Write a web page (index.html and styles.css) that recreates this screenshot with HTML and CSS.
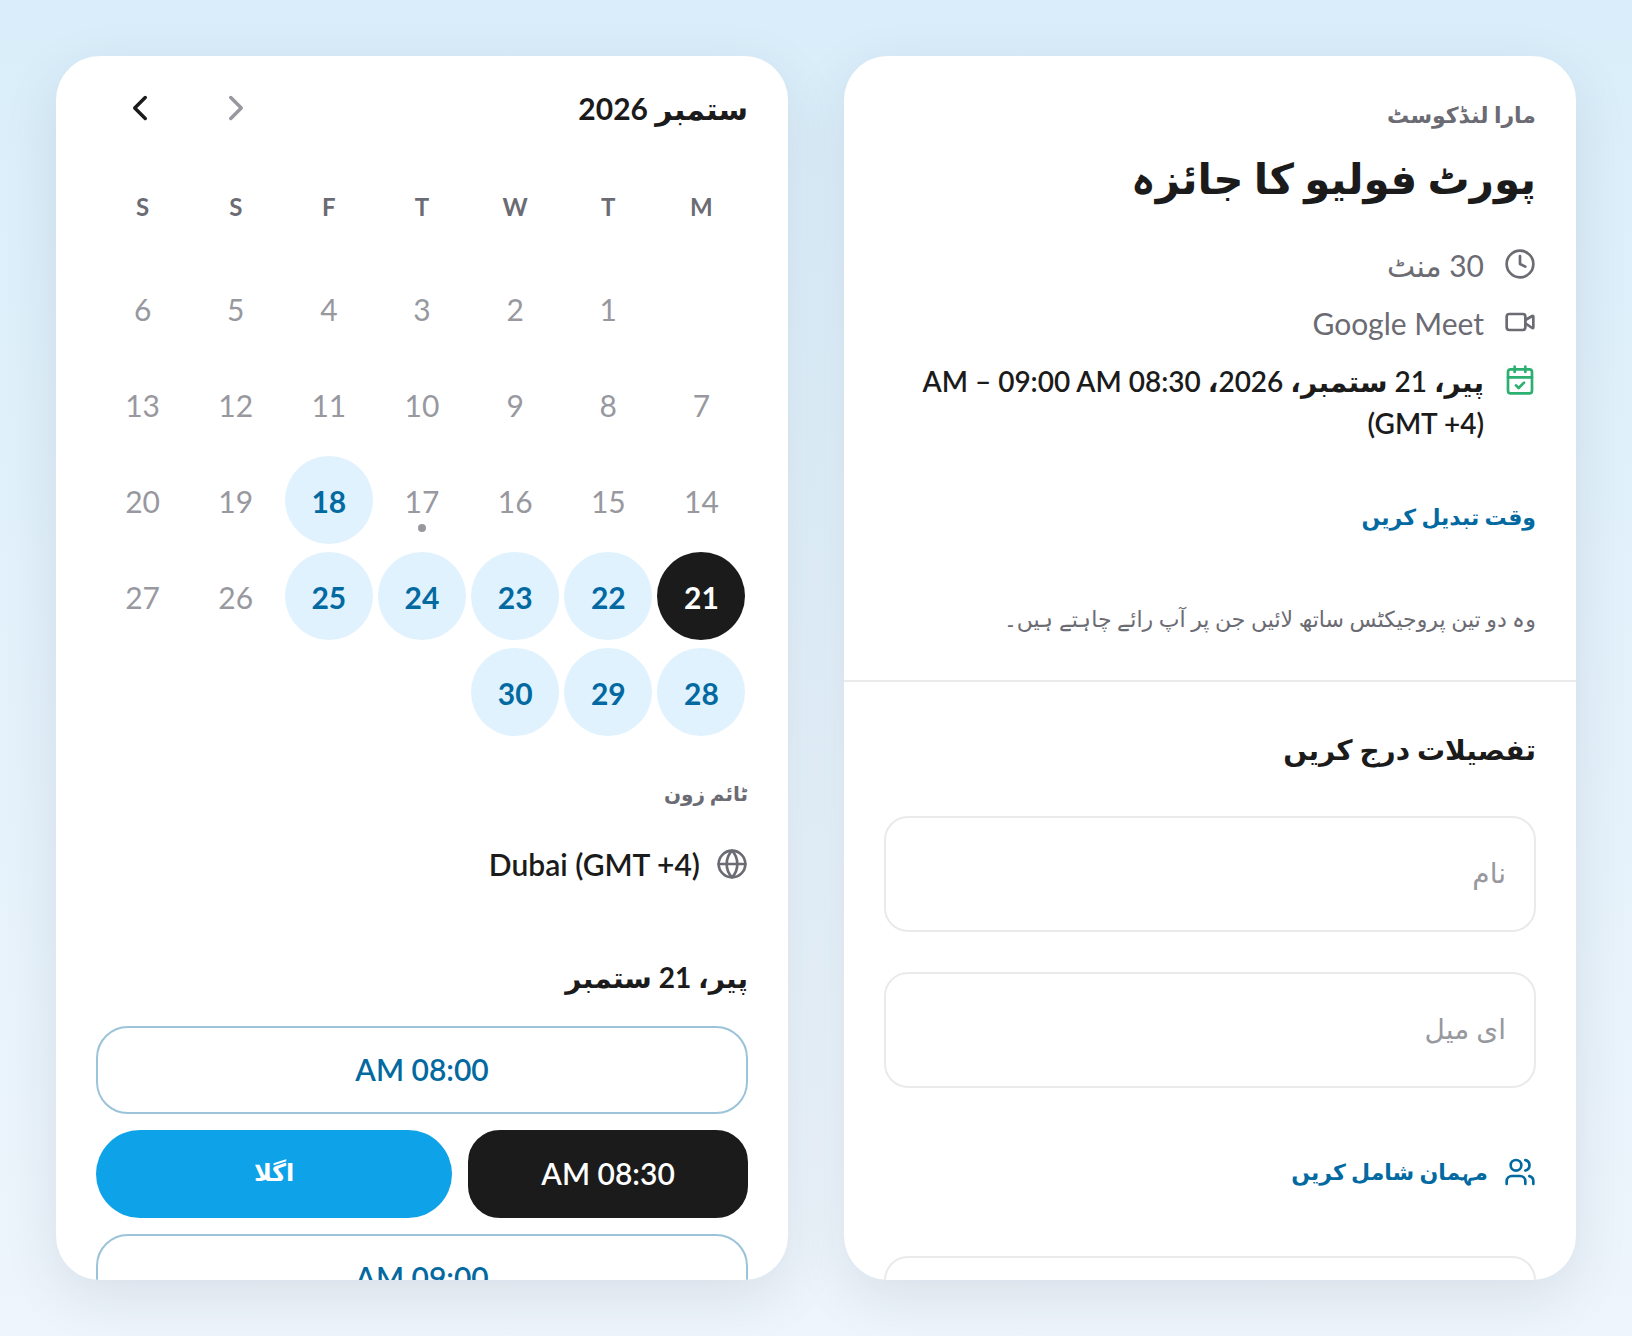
FILE: index.html
```
<!DOCTYPE html>
<html lang="ur" dir="rtl">
<head>
    <meta charset="UTF-8">
    <meta name="viewport" content="width=device-width, initial-scale=1.0">
    <title>پورٹ فولیو کا جائزہ</title>
    <link rel="stylesheet" href="styles.css">
</head>
<body>
    <main class="booking">
        <section class="card details">
            <header class="event">
                <p class="host">مارا لنڈکوسٹ</p>
                <h1>پورٹ فولیو کا جائزہ</h1>
                <ul class="meta">
                    <li>
                        <svg class="icon" viewBox="0 0 24 24"><circle cx="12" cy="12" r="10"/><path d="M12 6v6l4 2"/></svg>
                        <span>30 منٹ</span>
                    </li>
                    <li>
                        <svg class="icon" viewBox="0 0 24 24"><path d="m16 13 5.2 3.5a.5.5 0 0 0 .8-.4V7.9a.5.5 0 0 0-.8-.4L16 10.500"/><rect x="2" y="6" width="14" height="12" rx="2"/></svg>
                        <span>Google Meet</span>
                    </li>
                    <li class="when">
                        <svg class="icon" viewBox="0 0 24 24"><path d="M8 2v4M16 2v4M3 10h18M9 16l2 2 4-4"/><rect x="3" y="4" width="18" height="18" rx="2"/></svg>
                        <span>پیر، 21 ستمبر، 2026، 08:30 AM – 09:00 AM (GMT +4)</span>
                    </li>
                </ul>
                <a class="change" href="#calendar">وقت تبدیل کریں</a>
                <p class="about">وہ دو تین پروجیکٹس ساتھ لائیں جن پر آپ رائے چاہتے ہیں۔</p>
            </header>

            <form class="form">
                <h2>تفصیلات درج کریں</h2>
                <input type="text" name="name" placeholder="نام" aria-label="نام">
                <input type="email" name="email" placeholder="ای میل" aria-label="ای میل">
                <button type="button" class="guests">
                    <svg class="icon" viewBox="0 0 24 24"><path d="M16 21v-2a4 4 0 0 0-4-4H6a4 4 0 0 0-4 4v2M22 21v-2a4 4 0 0 0-3-3.900M16 3.100a4 4 0 0 1 0 7.800"/><circle cx="9" cy="7" r="4"/></svg>
                    <span>مہمان شامل کریں</span>
                </button>
                <textarea name="notes" rows="4" aria-label="نوٹس"></textarea>
            </form>
        </section>

        <section class="card schedule" id="calendar">
            <header class="month">
                <h2>ستمبر 2026</h2>
                <div class="arrows">
                    <button type="button" class="arrow" disabled aria-label="پچھلا مہینہ"><svg viewBox="0 0 24 24"><path d="m9 18 6-6-6-6"/></svg></button>
                    <button type="button" class="arrow" aria-label="اگلا مہینہ"><svg viewBox="0 0 24 24"><path d="m15 18-6-6 6-6"/></svg></button>
                </div>
            </header>

            <table class="days">
                <thead>
                    <tr><th>M</th><th>T</th><th>W</th><th>T</th><th>F</th><th>S</th><th>S</th></tr>
                </thead>
                <tbody>
                    <tr>
                        <td></td>
                        <td><button type="button" disabled>1</button></td>
                        <td><button type="button" disabled>2</button></td>
                        <td><button type="button" disabled>3</button></td>
                        <td><button type="button" disabled>4</button></td>
                        <td><button type="button" disabled>5</button></td>
                        <td><button type="button" disabled>6</button></td>
                    </tr>
                    <tr>
                        <td><button type="button" disabled>7</button></td>
                        <td><button type="button" disabled>8</button></td>
                        <td><button type="button" disabled>9</button></td>
                        <td><button type="button" disabled>10</button></td>
                        <td><button type="button" disabled>11</button></td>
                        <td><button type="button" disabled>12</button></td>
                        <td><button type="button" disabled>13</button></td>
                    </tr>
                    <tr>
                        <td><button type="button" disabled>14</button></td>
                        <td><button type="button" disabled>15</button></td>
                        <td><button type="button" disabled>16</button></td>
                        <td><button type="button" class="today" disabled>17</button></td>
                        <td><button type="button" class="open">18</button></td>
                        <td><button type="button" disabled>19</button></td>
                        <td><button type="button" disabled>20</button></td>
                    </tr>
                    <tr>
                        <td><button type="button" class="selected">21</button></td>
                        <td><button type="button" class="open">22</button></td>
                        <td><button type="button" class="open">23</button></td>
                        <td><button type="button" class="open">24</button></td>
                        <td><button type="button" class="open">25</button></td>
                        <td><button type="button" disabled>26</button></td>
                        <td><button type="button" disabled>27</button></td>
                    </tr>
                    <tr>
                        <td><button type="button" class="open">28</button></td>
                        <td><button type="button" class="open">29</button></td>
                        <td><button type="button" class="open">30</button></td>
                        <td></td>
                        <td></td>
                        <td></td>
                        <td></td>
                    </tr>
                </tbody>
            </table>

            <h3 class="zone-label">ٹائم زون</h3>
            <button type="button" class="zone">
                <svg class="icon" viewBox="0 0 24 24"><circle cx="12" cy="12" r="10"/><path d="M12 2a14.500 14.500 0 0 0 0 20 14.500 14.500 0 0 0 0-20M2 12h20"/></svg>
                <span>Dubai (GMT +4)</span>
            </button>

            <h3 class="slots-title">پیر، 21 ستمبر</h3>
            <div class="slots">
                <button type="button" class="slot">08:00 AM</button>
                <div class="slot-row">
                    <button type="button" class="slot picked">08:30 AM</button>
                    <button type="button" class="next">اگلا</button>
                </div>
                <button type="button" class="slot">09:00 AM</button>
            </div>
        </section>
    </main>
</body>
</html>
```

FILE: styles.css
```
* {
    box-sizing: border-box;
}
body {
    margin: 0;
    height: 100vh;
    padding: 56px;
    font-family: Lato, "DejaVu Sans", sans-serif;
    font-size: 30px;
    line-height: 42px;
    color: #1b1b1b;
    background: linear-gradient(#d9eefa, #eef5fc);
}
h1, h2, h3, p, ul {
    margin: 0;
    padding: 0;
}
button, input, textarea {
    font: inherit;
    color: inherit;
}
button {
    background: none;
    border: none;
    padding: 0;
    cursor: pointer;
}
.booking {
    display: grid;
    grid-template-columns: 1fr 1fr;
    gap: 56px;
    height: 100%;
}
.card {
    background: #fff;
    border-radius: 44px;
    box-shadow: 0 16px 56px rgba(30, 40, 60, 0.1);
    overflow: hidden;
}
.icon {
    flex: none;
    width: 32px;
    height: 32px;
    fill: none;
    stroke: currentColor;
    stroke-width: 2;
    stroke-linecap: round;
    stroke-linejoin: round;
}

/* event details */
.event {
    padding: 40px;
    border-bottom: 2px solid #e9eaeb;
}
.host {
    font-size: 22px;
    line-height: 38px;
    font-weight: 700;
    color: #6b6b73;
}
h1 {
    margin-top: 8px;
    font-size: 42px;
    line-height: 72px;
    font-weight: 700;
}
.meta {
    display: flex;
    flex-direction: column;
    gap: 16px;
    margin-top: 30px;
    list-style: none;
    color: #6b6b73;
}
.meta li {
    display: flex;
    gap: 20px;
}
.meta .icon {
    margin-top: 4px;
}
.meta .when {
    font-size: 28px;
    color: #1b1b1b;
    font-weight: 600;
}
.when .icon {
    color: #2bb070;
}
.change {
    display: block;
    margin-top: 52px;
    font-size: 22px;
    font-weight: 700;
    color: #0369a1;
    text-decoration: none;
}
.about {
    margin-top: 60px;
    font-size: 22px;
    color: #6b6b73;
}
.form {
    display: flex;
    flex-direction: column;
    gap: 40px;
    padding: 40px;
}
.form h2 {
    font-size: 28px;
    line-height: 54px;
    font-weight: 700;
}
.form input, .form textarea {
    width: 100%;
    height: 116px;
    padding: 0 28px 4px;
    border: 2px solid #e9eaeb;
    border-radius: 24px;
    background: #fff;
    font-size: 28px;
    outline: none;
    resize: none;
}
.form textarea {
    height: 200px;
}
.form input::placeholder {
    color: #98989f;
    opacity: 1;
}
.guests {
    display: flex;
    align-items: center;
    gap: 16px;
    height: 88px;
    color: #0369a1;
    font-size: 22px;
    font-weight: 700;
}

/* calendar and time slots */
.schedule {
    padding: 8px 40px 0;
}
.month {
    display: flex;
    justify-content: space-between;
    align-items: center;
}
.month h2 {
    font-size: 30px;
    font-weight: 700;
}
.arrows {
    display: flex;
    gap: 8px;
}
.arrow {
    display: flex;
    align-items: center;
    justify-content: center;
    width: 88px;
    height: 88px;
}
.arrow svg {
    width: 42px;
    height: 42px;
    fill: none;
    stroke: currentColor;
    stroke-width: 2;
    stroke-linecap: round;
    stroke-linejoin: round;
}
.arrow:disabled {
    color: #98989f;
}
.days {
    width: 100%;
    table-layout: fixed;
    border-collapse: collapse;
    text-align: center;
}
.days th {
    height: 108px;
    padding: 2px 0 0;
    font-size: 24px;
    font-weight: 700;
    color: #6b6b73;
}
.days td {
    height: 96px;
    padding: 0;
}
.days button {
    position: relative;
    display: block;
    width: 88px;
    height: 88px;
    margin: 0 auto;
    padding-top: 2px;
    border-radius: 50%;
}
.days button:disabled {
    color: #98989f;
    font-weight: 400;
}
.days .open {
    background: #e0f2fe;
    color: #0369a1;
    font-weight: 700;
}
.days .selected {
    background: #1b1b1b;
    color: #fff;
    font-weight: 700;
}
.days .today::after {
    content: "";
    position: absolute;
    left: 40px;
    bottom: 12px;
    width: 8px;
    height: 8px;
    border-radius: 50%;
    background: #98989f;
}
.zone-label {
    margin-top: 32px;
    font-size: 20px;
    font-weight: 700;
    color: #6b6b73;
}
.zone {
    display: flex;
    align-items: center;
    gap: 16px;
    height: 88px;
    margin-top: 6px;
    font-weight: 600;
}
.zone .icon {
    color: #6b6b73;
}
.slots-title {
    margin: 48px 0 28px;
    font-size: 28px;
    font-weight: 700;
}
.slots {
    display: flex;
    flex-direction: column;
    gap: 16px;
}
.slot {
    height: 88px;
    padding-bottom: 2px;
    border: 2px solid #9bc3d9;
    border-radius: 32px;
    color: #0369a1;
    font-weight: 600;
}
.slot-row {
    display: grid;
    grid-template-columns: 11fr 14fr;
    gap: 16px;
}
.picked {
    background: #1b1b1b;
    border-color: #1b1b1b;
    color: #fff;
}
.next {
    padding-bottom: 4px;
    border-radius: 44px;
    background: #0ea2e8;
    color: #fff;
    font-size: 24px;
    font-weight: 700;
}
```
